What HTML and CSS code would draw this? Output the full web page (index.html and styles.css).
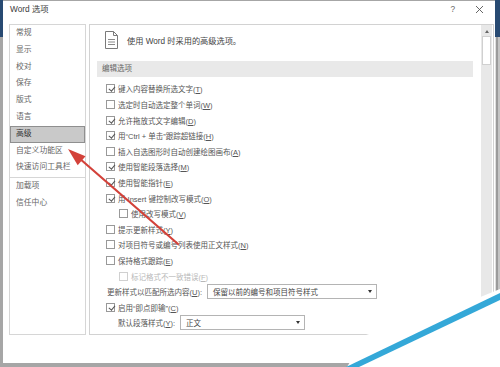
FILE: index.html
```html
<!DOCTYPE html>
<html lang="zh-CN">
<head>
  <meta charset="UTF-8">
  <meta name="viewport" content="width=device-width, initial-scale=1.0">
  <title>Word 选项</title>
  <link rel="stylesheet" href="styles.css">
</head>
<body>
  <div class="frame">
    <div class="dialog">
      <div class="titlebar">
        <span class="title">Word 选项</span>
        <span class="help">?</span>
        <svg class="close" width="9" height="9" viewBox="0 0 9 9"><path d="M1 1 L8 8 M8 1 L1 8" stroke="#555" stroke-width="0.9"/></svg>
      </div>

      <div class="main">
        <ul class="nav">
          <li>常规</li>
          <li>显示</li>
          <li>校对</li>
          <li>保存</li>
          <li>版式</li>
          <li>语言</li>
          <li class="active">高级</li>
          <li>自定义功能区</li>
          <li>快速访问工具栏</li>
          <li class="sep"></li>
          <li>加载项</li>
          <li>信任中心</li>
        </ul>

        <div class="pane">
          <div class="options">
            <div class="intro">
              <svg width="13" height="18" viewBox="0 0 13 18">
                <path d="M0.5 0.5 H8.5 L12.5 4.5 V17.5 H0.5 Z" fill="#fff" stroke="#7a7a7a"/>
                <path d="M8.5 0.5 V4.5 H12.5" fill="none" stroke="#7a7a7a"/>
                <path d="M3 8.5 H10 M3 11 H10 M3 13.5 H10" stroke="#8a8a8a"/>
              </svg>
              <span>使用 Word 时采用的高级选项。</span>
            </div>

            <div class="section">编辑选项</div>

            <div class="opt on"><span class="cb"></span><span>键入内容替换所选文字(<u>T</u>)</span></div>
            <div class="opt"><span class="cb"></span><span>选定时自动选定整个单词(<u>W</u>)</span></div>
            <div class="opt on"><span class="cb"></span><span>允许拖放式文字编辑(<u>D</u>)</span></div>
            <div class="opt on"><span class="cb"></span><span>用“Ctrl + 单击”跟踪超链接(<u>H</u>)</span></div>
            <div class="opt"><span class="cb"></span><span>插入自选图形时自动创建绘图画布(<u>A</u>)</span></div>
            <div class="opt on"><span class="cb"></span><span>使用智能段落选择(<u>M</u>)</span></div>
            <div class="opt on"><span class="cb"></span><span>使用智能指针(<u>E</u>)</span></div>
            <div class="opt on"><span class="cb"></span><span>用 Insert 键控制改写模式(<u>O</u>)</span></div>
            <div class="opt sub"><span class="cb"></span><span>使用改写模式(<u>V</u>)</span></div>
            <div class="opt"><span class="cb"></span><span>提示更新样式(<u>Y</u>)</span></div>
            <div class="opt"><span class="cb"></span><span>对项目符号或编号列表使用正文样式(<u>N</u>)</span></div>
            <div class="opt"><span class="cb"></span><span>保持格式跟踪(<u>E</u>)</span></div>
            <div class="opt sub off"><span class="cb"></span><span>标记格式不一致错误(<u>F</u>)</span></div>
            <div class="opt field">
              <span class="field-label wide-label">更新样式以匹配所选内容(<u>U</u>):</span>
              <span class="select wide">保留以前的编号和项目符号样式<i class="caret"></i></span>
            </div>
            <div class="opt on"><span class="cb"></span><span>启用“即点即输”(<u>C</u>)</span></div>
            <div class="opt field sub">
              <span class="field-label short-label">默认段落样式(<u>Y</u>):</span>
              <span class="select short">正文<i class="caret"></i></span>
            </div>
          </div>

          <div class="scrollbar">
            <span class="sb-up"></span>
            <span class="sb-thumb"></span>
          </div>
        </div>
      </div>

      <div class="footer"></div>
    </div>

    <!-- annotation arrow and the corner watermark sit over the dialog -->
    <svg class="overlay" width="500" height="367" viewBox="0 0 500 367">
      <line x1="178" y1="244" x2="79" y2="158" stroke="#d3423a" stroke-width="2.2" stroke-linecap="round"/>
      <polygon points="68,149 85.5,156.3 77.7,165.3" fill="#d3423a"/>
      <polygon points="347,367 366,335 478,298 500,289 500,367" fill="#fff"/>
      <polygon points="346,367 500,293 500,300 359,367" fill="#34a8d8"/>
    </svg>
  </div>
</body>
</html>
```

FILE: styles.css
```css
* {
  box-sizing: border-box;
}

body {
  margin: 0;
  font-family: "Liberation Sans", "Noto Sans CJK SC", sans-serif;
  color: #555;
}

/* Window frame round the dialog */
.frame {
  position: relative;
  width: 500px;
  height: 367px;
  padding: 1px 5px 4px 3px;
  overflow: hidden;
  background:
    linear-gradient(#284a72, #284a72) left top / 3px 37px no-repeat,
    linear-gradient(#284a72, #284a72) right top / 5px 37px no-repeat,
    linear-gradient(to right, #dedede 0 1px, #9b9b9b 1px 3px, #c4c4c4 3px) right top / 5px 100% no-repeat,
    #a6a6a6;
}

.dialog {
  width: 492px;
  height: 362px;
  background-color: #fff;
  display: flex;
  flex-direction: column;
}

/* Title bar */
.titlebar {
  height: 23px;
  display: flex;
  align-items: flex-start;
  padding: 3px 11px 0 7px;
  font-size: 8.3px;
  line-height: 11px;
  color: #3a3a3a;
}

.help {
  margin-left: auto;
  color: #666;
}

.close {
  margin: 1px 0 0 20px;
}

/* Body: nav + options pane */
.main {
  height: 311px;
  display: flex;
  gap: 3px;
  padding-left: 6px;
}

.nav {
  width: 77px;
  margin: 0;
  padding: 0;
  list-style: none;
  border: 1px solid #d6d6d6;
  font-size: 7.8px;
  color: #666;
}

.nav li {
  height: 16.8px;
  line-height: 16.8px;
  padding-left: 6px;
  white-space: nowrap;
}

.nav .active {
  background-color: #c9c9c9;
  border: 1px solid #8f8f8f;
  padding-left: 5px;
  line-height: 14.8px;
  color: #333;
}

.nav .sep {
  height: 1px;
  margin-top: 1px;
  padding: 0;
  background-color: #d6d6d6;
}

.pane {
  width: 405px;
  border: 1px solid #d2d2d2;
  display: flex;
  overflow: hidden;
}

.options {
  flex: 1;
  overflow: hidden;
  font-size: 7.5px;
}

.intro {
  height: 19px;
  margin-top: 5px;
  padding-left: 15px;
  display: flex;
  align-items: center;
  gap: 9px;
  font-size: 8.2px;
  color: #444;
}

.section {
  height: 16px;
  line-height: 16px;
  margin: 12px 8px 4.2px 7px;
  padding-left: 5px;
  background-color: #e9e9e9;
  color: #666;
}

/* Option rows */
.opt {
  height: 15.6px;
  display: flex;
  align-items: center;
  gap: 3px;
  padding-left: 16px;
  white-space: nowrap;
}

.opt.sub {
  padding-left: 29px;
}

.opt u {
  text-underline-offset: 1px;
}

.cb {
  position: relative;
  flex: none;
  width: 9px;
  height: 9px;
  border: 1px solid #999;
  background-color: #fff;
}

.on .cb::after {
  content: "";
  position: absolute;
  left: 2.5px;
  top: 0;
  width: 2.5px;
  height: 5px;
  border: solid #555;
  border-width: 0 1px 1px 0;
  transform: rotate(40deg);
}

.off {
  color: #b8b8b8;
}

.off .cb {
  border-color: #d0d0d0;
}

/* Label + dropdown rows */
.opt.field {
  gap: 5px;
  padding-left: 17px;
}

.opt.field.sub {
  padding-left: 28px;
}

.wide-label {
  width: 95px;
}

.short-label {
  width: 57px;
}

.select {
  height: 15px;
  display: flex;
  align-items: center;
  padding-left: 5px;
  border: 1px solid #b4b4b4;
  background-color: #fff;
  color: #444;
}

.select.wide {
  width: 170px;
}

.select.short {
  width: 125px;
}

.caret {
  margin-left: auto;
  margin-right: 4px;
  border-left: 2.5px solid transparent;
  border-right: 2.5px solid transparent;
  border-top: 3px solid #333;
}

/* Scrollbar */
.scrollbar {
  width: 11px;
  margin-right: 1px;
  padding-top: 5px;
  display: flex;
  flex-direction: column;
  align-items: center;
  background-color: #e8e8e8;
}

.sb-up {
  border-left: 2.5px solid transparent;
  border-right: 2.5px solid transparent;
  border-bottom: 3px solid #666;
}

.sb-thumb {
  width: 9px;
  height: 29px;
  margin-top: 3px;
  background-color: #fff;
  border: 1px solid #d0d0d0;
}

.footer {
  flex: 1;
}

.overlay {
  position: absolute;
  left: 0;
  top: 0;
  pointer-events: none;
}
```
